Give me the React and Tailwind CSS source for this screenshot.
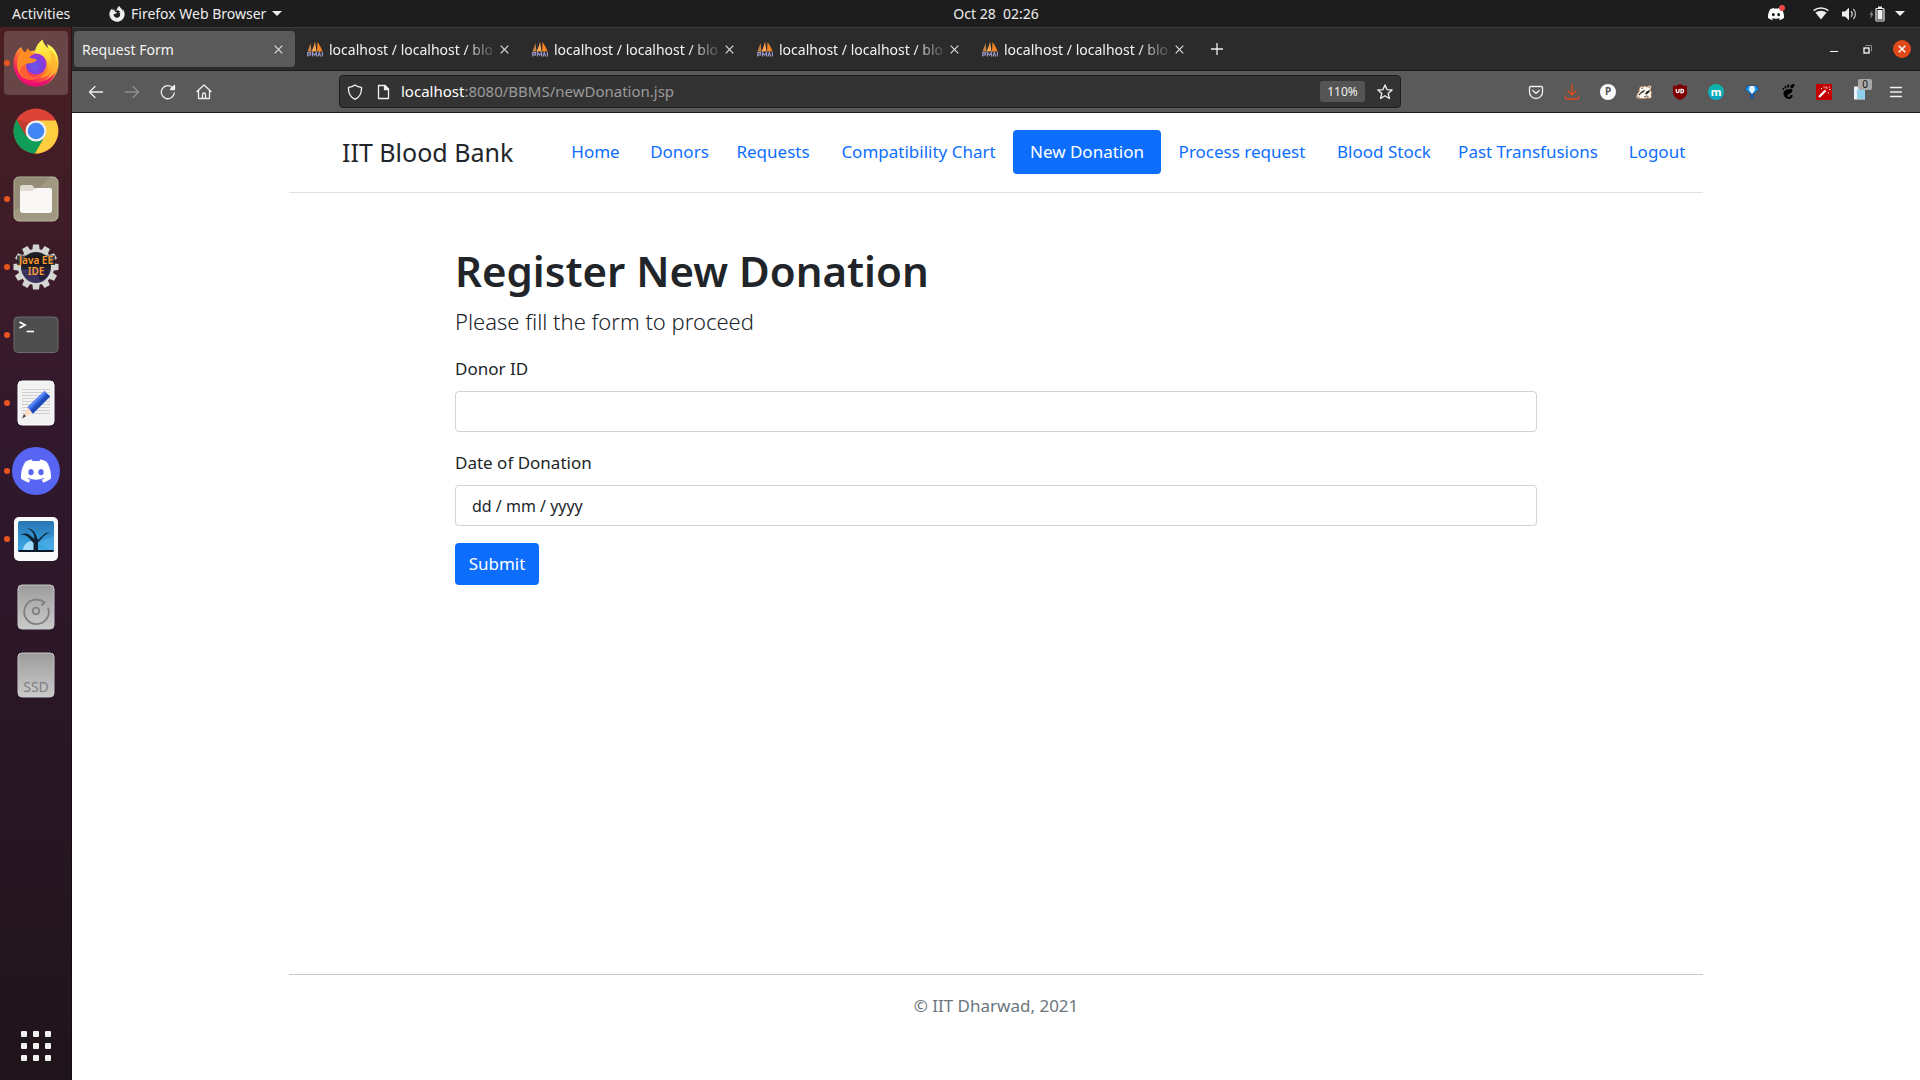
import { FaFirefoxBrowser } from 'react-icons/fa';
import { SiDiscord, SiGnome } from 'react-icons/si';

const tabs = ['a', 'b', 'c', 'd'];

const links = [
  { label: 'Home', width: 'w-[83px]' },
  { label: 'Donors', width: 'w-[85px]' },
  { label: 'Requests', width: 'w-[102px]' },
  { label: 'Compatibility Chart', width: 'w-[189px]' },
  { label: 'New Donation', width: 'w-[148px]', active: true },
  { label: 'Process request', width: 'w-[162px]' },
  { label: 'Blood Stock', width: 'w-[122px]' },
  { label: 'Past Transfusions', width: 'w-[166px]' },
  { label: 'Logout', width: 'w-[92px]' },
];

function Caret() {
  return (
    <svg width="10" height="5" viewBox="0 0 10 5" fill="#eee"><path d="M0 0h10L5 5z" /></svg>
  );
}

function TopBar() {
  return (
    <header className="flex h-[27px] shrink-0 items-center bg-[#1d1d1d] text-sm text-[#eee]">
      <div className="flex flex-1 basis-[87px] items-center pl-3">
        <button className="w-[97px] text-left">Activities</button>
        <button className="flex items-center gap-1.5 whitespace-nowrap">
          <FaFirefoxBrowser size={16} />
          <span>Firefox Web Browser</span>
          <Caret />
        </button>
      </div>
      <button className="whitespace-pre">Oct 28  02:26</button>
      <div className="flex flex-1 basis-0 items-center justify-end pr-[15px]">
        <span className="relative mr-[29px]">
          <SiDiscord size={16} color="#fff" />
          <span className="absolute -right-px -top-px h-[6px] w-[6px] rounded-full bg-[#f04747]" />
        </span>
        <svg className="mr-3" width="16" height="13" viewBox="0 0 16 13" fill="#eee">
          <path d="M2.4 5.6 8 12.6l5.6-7A9 9 0 0 0 2.4 5.600z" />
          <path d="M.6 3.600A12 12 0 0 1 15.400 3.600" fill="none" stroke="#eee" strokeWidth="1.600" />
        </svg>
        <svg className="mr-3" width="16" height="14" viewBox="0 0 16 14" fill="#eee">
          <path d="M1 4.500h3L8 .8v12.400L4 9.500H1z" />
          <path d="M10 4.300a4 4 0 0 1 0 5.400" fill="none" stroke="#ccc" strokeWidth="1.300" />
          <path d="M12.300 2a7 7 0 0 1 0 10" fill="none" stroke="#bbb" strokeWidth="1.300" />
        </svg>
        <svg className="mr-2.5" width="16" height="16" viewBox="0 0 16 16">
          <path d="M3.500 4 0.500 9h1.600L1.500 13 4.500 7.500H2.900z" fill="#888" />
          <rect x="7" y="2.500" width="8" height="12.500" rx="1" fill="none" stroke="#eee" strokeWidth="1.200" />
          <path d="M9 .5h4v2H9zM8.500 4h5v9.500h-5z" fill="#eee" />
        </svg>
        <Caret />
      </div>
    </header>
  );
}

function FirefoxIcon() {
  return (
    <svg width="46" height="48" viewBox="0 0 46 48">
      <defs>
        <linearGradient id="ffBody" x1="0.85" y1="0.1" x2="0.2" y2="0.95">
          <stop offset="0.05" stopColor="#fff44f" />
          <stop offset="0.35" stopColor="#ffa436" />
          <stop offset="0.6" stopColor="#ff5a3c" />
          <stop offset="0.85" stopColor="#f5156c" />
        </linearGradient>
        <linearGradient id="ffFlame" x1="0.5" y1="0" x2="0.7" y2="1">
          <stop offset="0" stopColor="#fff44f" />
          <stop offset="0.5" stopColor="#ffd63a" />
          <stop offset="1" stopColor="#ff8a1e" />
        </linearGradient>
        <radialGradient id="ffGlobe" cx="0.45" cy="0.6" r="0.6">
          <stop offset="0" stopColor="#6a5af0" />
          <stop offset="0.6" stopColor="#7c3fdc" />
          <stop offset="1" stopColor="#a62fd6" />
        </radialGradient>
      </defs>
      <path d="M8 8C9 12 11 14 14 14c6-4 14-3 17 3 6-2 5-6 3-12 8 3 12 12 11.500 20A22.500 22.500 0 0 1 .5 25C.4 18 3 12 8 8z" fill="url(#ffBody)" />
      <path d="M22 16C21 10 25 4 29.500.5c1 5 4 7 7.500 10.500C41 15 43 21 41 28c-2 8-9 11-15 10 7-2 11-8 9-14-2-5-7-8-13-8z" fill="url(#ffFlame)" />
      <path d="M37 11c5 4 8 10 7.500 16C44 36 37 43 29 45c8-6 11-13 10-21-.4-5-1-9-2-13z" fill="#ffb52e" opacity="0.7" />
      <path d="M3 35c5 8 13 10 20 9 8-1 14-4 19-10-4 9-11 13.500-19 13.500S6 43 3 35z" fill="#e3126f" />
      <circle cx="23" cy="25" r="10.500" fill="url(#ffGlobe)" />
      <path d="M8 8c1 2 2 4 4 5.500L15 9c1 3 3 5 6 6.500-3 1-4 2-5 3l8 2c-1 3-7 4-10 4-2 2-2 5-.5 8 2 5 7 6.500 12 5.500-6 5-16 3-20-5C3 26 4 18 7 15z" fill="#ff8b24" />
      <path d="M13 25c-2 4-1 9 3 11.500 3 2 7 2 10 1-6 5-15 3-19-4-1-2 2-8 6-8.500z" fill="#ff5e35" />
    </svg>
  );
}

function ChromeIcon() {
  return (
    <svg width="46" height="46" viewBox="0 0 46 46">
      <circle cx="23" cy="23" r="22.500" fill="#dd4437" />
      <path d="M3.600 11.600A22.500 22.500 0 0 0 22 45.500L32.500 28 23 23 13.500 28z" fill="#0f9d58" />
      <path d="M42.700 12.500A22.500 22.500 0 0 1 22 45.480L32.200 27.500 31 17 23 12.500z" fill="#ffcd40" />
      <path d="M3.600 11.600 13 28l6-13z" fill="#c33b2e" />
      <circle cx="23" cy="23" r="10.500" fill="#f1f1f1" />
      <circle cx="23" cy="23" r="8.300" fill="#4285f4" />
    </svg>
  );
}

function FilesIcon() {
  return (
    <svg width="46" height="46" viewBox="0 0 46 46">
      <rect x="1" y="1" width="44" height="44" rx="5" fill="#a09880" stroke="#bdb7a2" />
      <path d="M1.500 6a4.500 4.500 0 0 1 4.500-4.500h31L1.500 35z" fill="#948c76" />
      <path d="M7 11.500a2.500 2.500 0 0 1 2.500-2.500H19l4 4.500v5H7z" fill="#dedad0" />
      <path d="M7 15h12l4-3h14a2 2 0 0 1 2 2v20a3 3 0 0 1-3 3H10a3 3 0 0 1-3-3z" fill="#f9f8f7" />
    </svg>
  );
}

const teeth = [0, 30, 60, 90, 120, 150, 180, 210, 240, 270, 300, 330];

function JavaIcon() {
  return (
    <svg width="46" height="46" viewBox="0 0 46 46">
      {teeth.map((angle) => (
        <path key={angle} d="M20 .5h6l1 8.500h-8z" fill="#d3d5d1" transform={`rotate(${angle} 23 23)`} />
      ))}
      <circle cx="23" cy="23" r="18" fill="#d3d5d1" />
      <circle cx="23" cy="23" r="15" fill="#20202a" />
      <path d="M9 25h28a14 14 0 0 1-28 0z" fill="#3c3260" />
      <path d="M23 25h14a14 14 0 0 1-10 12z" fill="#26213a" />
      <path d="M4 11.500h38v9.500H4z" fill="#1a1614" opacity="0.75" />
      <g fontFamily="Noto Sans, sans-serif" fontSize="10" fontWeight="600" fill="#ff9d33" textAnchor="middle">
        <text x="23" y="20">Java EE</text>
        <text x="23" y="31">IDE</text>
      </g>
    </svg>
  );
}

function TerminalIcon() {
  return (
    <svg width="46" height="38" viewBox="0 0 46 38">
      <rect x="1" y="1" width="44" height="35.500" rx="4" fill="#4d4d4d" stroke="#6c6c6c" />
      <path d="m6.500 6 5.500 3-5.500 3" fill="none" stroke="#fff" strokeWidth="1.800" />
      <path d="M13.500 15.500h7.500" stroke="#fff" strokeWidth="1.600" />
    </svg>
  );
}

function EditorIcon() {
  return (
    <svg width="38" height="46" viewBox="0 0 38 46">
      <rect x="1" y="1" width="36" height="44" rx="4" fill="#f2f2f2" stroke="#fff" />
      <path d="M5 9.500h28M5 12.500h28M5 15.500h28M5 18.500h28M5 21.500h28M5 24.500h28M5 27.500h28M5 30.500h28M5 33.500h28" stroke="#d0d0d0" />
      <path d="m11.500 27.500 4.500 5-11 6z" fill="#ffdcc0" />
      <path d="m7 34 2 2.200L5 38.500z" fill="#444" />
      <path d="M27.500 11 33 16.500 16 33.500 10.500 27z" fill="#3465e0" />
      <path d="m30.500 14 2.500 2.500-17 17-2.500-3z" fill="#1e4bb8" />
      <path d="m27.500 11 1.500 1.500-17 16.500-1.500-2z" fill="#5a8af5" />
    </svg>
  );
}

function DiscordIcon() {
  return (
    <span className="flex h-12 w-12 items-center justify-center rounded-full bg-[#5865f2]">
      <SiDiscord size={30} color="#fff" />
    </span>
  );
}

function PhotoIcon() {
  return (
    <svg width="46" height="46" viewBox="0 0 46 46">
      <defs>
        <linearGradient id="sky" x1="0" y1="0" x2="0" y2="1">
          <stop offset="0" stopColor="#2a76b4" />
          <stop offset="1" stopColor="#3aacec" />
        </linearGradient>
      </defs>
      <rect x="1" y="1" width="44" height="44" rx="5" fill="#fafafa" />
      <rect x="5" y="5" width="36" height="31" rx="2" fill="url(#sky)" />
      <path d="M10 34a9 9 0 0 1 13-8v8z" fill="#a5dcfa" />
      <path d="M24 27 41 36V20z" fill="#5ab4ea" opacity="0.5" />
      <path d="M20.500 35V27l-5-5.500c-2-2-4-3-8-2.500 3-2 7-2 9 0l5 4-.5-4c-1-3-3-5-7-7 5 1 8 4 9 7l2 5 4-4c3-3 5-4 9-3-4 0-6 2-8 4l-5 5.500V35z" fill="#0e2233" />
      <path d="M5 34h36a2 2 0 0 1-2 2H7a2 2 0 0 1-2-2z" fill="#081826" />
    </svg>
  );
}

function DriveIcon({ ssd }) {
  return (
    <svg width="38" height="46" viewBox="0 0 38 46">
      <defs>
        <linearGradient id="drive" x1="0" y1="0" x2="0" y2="1">
          <stop offset="0" stopColor="#9c9c9c" />
          <stop offset="1" stopColor="#cbcbcb" />
        </linearGradient>
      </defs>
      <rect x="1" y="1" width="36" height="44" rx="4" fill="url(#drive)" stroke="#c8c8c8" />
      {ssd ? (
        <text x="19" y="40" fontFamily="Noto Sans, sans-serif" fontSize="14" fill="#808080" textAnchor="middle">SSD</text>
      ) : (
        <g fill="none" stroke="#808080" strokeWidth="1.800">
          <path d="M31 23.500A12.300 12.300 0 1 1 27.500 18.500L24.500 21.500" />
          <circle cx="19" cy="27" r="3.300" />
        </g>
      )}
    </svg>
  );
}

const dockApps = [
  { name: 'Firefox', icon: <FirefoxIcon />, running: true, focused: true },
  { name: 'Chrome', icon: <ChromeIcon /> },
  { name: 'Files', icon: <FilesIcon />, running: true },
  { name: 'Eclipse', icon: <JavaIcon />, running: true },
  { name: 'Terminal', icon: <TerminalIcon />, running: true },
  { name: 'Text Editor', icon: <EditorIcon />, running: true },
  { name: 'Discord', icon: <DiscordIcon />, running: true },
  { name: 'Image Viewer', icon: <PhotoIcon />, running: true },
  { name: 'Disk', icon: <DriveIcon /> },
  { name: 'SSD', icon: <DriveIcon ssd /> },
];

function Dock() {
  return (
    <aside className="flex w-[72px] shrink-0 flex-col items-center gap-1 border-r border-black/40 bg-linear-to-b from-[#4a1f22] via-[#31182d] via-40% to-[#20141b] pt-1 pb-[19px]">
      {dockApps.map((app) => (
        <button
          key={app.name}
          aria-label={app.name}
          className={`relative flex h-16 w-16 items-center justify-center rounded ${app.focused ? 'bg-[#684648]' : ''}`}
        >
          {app.icon}
          {app.running && <span className="absolute left-0 top-[29px] h-1.5 w-1.5 rounded-full bg-[#e95420]" />}
        </button>
      ))}
      <button aria-label="Show Applications" className="mt-auto grid grid-cols-3 gap-1.5">
        {[0, 1, 2, 3, 4, 5, 6, 7, 8].map((n) => (
          <span key={n} className="h-1.5 w-1.5 rounded-[1px] bg-[#f0f0ee]" />
        ))}
      </button>
    </aside>
  );
}

function CloseMark() {
  return (
    <svg width="9" height="9" viewBox="0 0 9 9" stroke="#ddd" strokeWidth="1.200"><path d="m.7.7 7.600 7.600M8.300.7.700 8.300" /></svg>
  );
}

function SailsIcon() {
  return (
    <svg className="shrink-0" width="16" height="16" viewBox="0 0 16 16">
      <path d="M.5 10.500C1.500 8 2.500 5 3.500 2L4.500 10.500z" fill="#c98340" />
      <path d="M4.500 10.500C6 7.500 7.500 3.500 8 .5L9.500 10.500z" fill="#fba654" />
      <path d="M10 10.500 10.500 1C12.500 4 14.500 7 15.500 10.500z" fill="#f58220" />
      <path d="M.7 15.500V11.700h2.800v2.100H1M5.500 15.500v-4l2 2.500 2-2.500v4M11 15.500l1.300-4 1.300 4M15.400 11v4.500" fill="none" stroke="#9694c4" strokeWidth="1.200" />
    </svg>
  );
}

function TabStrip() {
  return (
    <div className="flex h-11 items-center border-y border-t-[#3c3c3c] border-b-[#1c1c1c] bg-[#2b2b2b] pl-0.5 text-sm text-[#f2f2f2]">
      <div className="flex h-9 w-[221px] items-center justify-between rounded bg-[#5a5a5a] pl-2 pr-3">
        <span className="pt-0.5">Request Form</span>
        <button aria-label="Close tab"><CloseMark /></button>
      </div>
      {tabs.map((tab) => (
        <div key={tab} className="flex h-9 w-[225px] items-center pl-3 pr-4">
          <SailsIcon />
          <span className="ml-1.5 w-[169px] shrink-0 whitespace-nowrap pt-0.5 mask-r-from-80% mask-r-to-100%">localhost / localhost / blo</span>
          <button aria-label="Close tab" className="ml-0.5 shrink-0"><CloseMark /></button>
        </div>
      ))}
      <button aria-label="New tab" className="ml-4">
        <svg width="12" height="12" viewBox="0 0 12 12" stroke="#eee" strokeWidth="1.300"><path d="M6 0v12M0 6h12" /></svg>
      </button>
      <div className="ml-auto flex items-center pr-[9px]">
        <button aria-label="Minimize" className="mr-[25px] mt-1 h-px w-2 bg-white" />
        <button aria-label="Restore" className="mr-[21px]">
          <svg width="9" height="9" viewBox="0 0 9 9" fill="none">
            <path d="M2.500.5h6v6" stroke="#888" />
            <rect x="1" y="3" width="5" height="5" stroke="#fff" strokeWidth="1.300" />
          </svg>
        </button>
        <button aria-label="Close window" className="flex h-[18px] w-[18px] items-center justify-center rounded-full bg-[#e2491a]">
          <svg width="8" height="8" viewBox="0 0 8 8" stroke="#fff" strokeWidth="1.400"><path d="m.7.7 6.600 6.600M7.300.7.700 7.300" /></svg>
        </button>
      </div>
    </div>
  );
}

function Icon16({ children, color = '#f0f0f0' }) {
  return (
    <svg width="16" height="16" viewBox="0 0 16 16" fill="none" stroke={color} strokeWidth="1.300" strokeLinecap="round" strokeLinejoin="round">
      {children}
    </svg>
  );
}

const navButtons = [
  { name: 'Back', icon: <Icon16><path d="M14.500 8h-13M7 2.500 1.500 8 7 13.500" /></Icon16> },
  { name: 'Forward', icon: <Icon16 color="#8f8f8f"><path d="M1.500 8h13M9 2.500 14.500 8 9 13.500" /></Icon16> },
  { name: 'Reload', icon: <Icon16><path d="M14.300 9A6.500 6.500 0 1 1 12.800 4" /><path d="M14.500 1.500v4h-4z" fill="#f0f0f0" /></Icon16> },
  { name: 'Home', icon: <Icon16><path d="M1 7.500 8 1l7 6.500M2.500 6.500V14.500h11V6.500M6.500 14.500v-4a1.500 1.500 0 0 1 3 0v4" /></Icon16> },
];

const extensions = [
  { name: 'Pocket', icon: <Icon16><path d="M2.500 2.500h11a1 1 0 0 1 1 1V8a6.500 6.500 0 0 1-13 0V3.500a1 1 0 0 1 1-1zM4.800 6.500 8 9.500l3.200-3" /></Icon16> },
  { name: 'Downloads', icon: <Icon16 color="#e2491a"><path d="M8 .8v10M4 7l4 4 4-4M1.500 12v1.500a1.500 1.500 0 0 0 1.500 1.500h10a1.500 1.500 0 0 0 1.500-1.500V12" /></Icon16> },
  { name: 'P', icon: <span className="flex h-4 w-4 items-center justify-center rounded-full bg-[#fafafa] text-[10px] font-bold text-[#555]">P</span> },
  {
    name: 'Privacy Badger',
    icon: (
      <svg width="16" height="14" viewBox="0 0 16 14">
        <path d="M.5 12 1.500 8.500 3 7l.5-4L5 1.500 7 2l1.500-1L11 2l3-1.500 1.300 1.500-1 2.500 1.200 3-.5 2 .5 2.500-1.500 1.200-3-.5-2 .8H1.500z" fill="#fbf6ef" stroke="#c98b55" strokeWidth="0.700" />
        <path d="M2.500 9.500 5.500 6.500 9 4.500 8 7 5 8.500 3.500 10.500z" fill="#35302c" />
        <path d="M9 9l1.500-2.500L14 5l-.5 2-3 2.500zM12.500 2l1.500.2-.5 1z" fill="#1d1a18" />
        <path d="M5.500 3.500 7 3M1.500 12l2 .5M8 12l2.500-1 2 .5" fill="none" stroke="#4a4039" strokeWidth="0.900" />
      </svg>
    ),
  },
  {
    name: 'uBlock Origin',
    icon: (
      <svg width="14" height="16" viewBox="0 0 14 16">
        <path d="M7 0c2 1.300 4.500 1.800 7 1.800V8c0 4-3 6.500-7 8-4-1.500-7-4-7-8V1.800C2.500 1.800 5 1.300 7 0z" fill="#800000" />
        <path d="M3.300 5v2.300a1.400 1.400 0 0 0 2.800 0V5" fill="none" stroke="#fff" strokeWidth="1.300" />
        <path d="M8 5.300h.8a1.800 1.800 0 0 1 0 3.600H8z" fill="none" stroke="#fff" strokeWidth="1.300" />
      </svg>
    ),
  },
  { name: 'm', icon: <span className="flex h-4 w-4 items-center justify-center rounded-full bg-linear-to-b from-[#0fb5a0] to-[#12a5cc] text-[11px] leading-none font-bold text-white">m</span> },
  {
    name: 'Gem',
    icon: (
      <svg width="14" height="14" viewBox="0 0 14 14">
        <path d="M2.500.5h9L14 4.500 8.500 9v4.500h-3V9L0 4.500z" fill="#0a3f8f" />
        <path d="M3 1h8l2.300 3.500L7 9.500.7 4.500z" fill="#1e9af0" />
        <path d="M5 1h4l1 4-3 4-3-4z" fill="#e6f6ff" />
        <path d="M6 9h2v5H6z" fill="#1a5fb0" />
      </svg>
    ),
  },
  { name: 'GNOME', icon: <SiGnome size={15} color="#000" /> },
  {
    name: 'Magic',
    icon: (
      <svg width="16" height="16" viewBox="0 0 16 16">
        <rect width="16" height="16" fill="#c40000" />
        <path d="m3 13 6.500-6.500" stroke="#fff" strokeWidth="2.200" />
        <path d="M10 2.500v2M13 5.500h1.500M12.500 8.500v1M5 4.500h1M7.500 3h1M12 3.500l-1 1M13.500 2.500v.8" stroke="#fff" />
      </svg>
    ),
  },
  {
    name: 'Notes',
    icon: (
      <span className="relative">
        <svg width="16" height="16" viewBox="0 0 16 16">
          <path d="M2 2.500h11v13H2z" fill="#e9f3f8" />
          <path d="M5 6h8v9H5z" fill="#8fd0ec" />
        </svg>
        <span className="absolute -top-[5px] left-1.5 flex h-[11px] w-3.5 items-center justify-center rounded-[2px] bg-[#a8a8a8] text-[10px] leading-none text-[#111]">0</span>
      </span>
    ),
  },
  { name: 'Menu', icon: <Icon16><path d="M2.500 3.500h11M2.500 8h11M2.500 12.500h11" /></Icon16> },
];

function Toolbar() {
  return (
    <div className="flex h-[42px] items-center border-b border-[#1c1c1c] bg-[#5a5a5a]">
      <div className="flex w-[267px] shrink-0 pl-1.5">
        {navButtons.map((b) => (
          <button key={b.name} aria-label={b.name} className="flex h-9 w-9 items-center justify-center">{b.icon}</button>
        ))}
      </div>
      <div className="flex h-[33px] flex-1 items-center rounded border border-[#1e1e1e] bg-[#333] pl-[7px]">
        <Icon16><path d="M8 .9c2 1.500 4.300 2.200 6.500 2.400.3 5-1.500 9.700-6.500 12-5-2.300-6.800-7-6.500-12C3.700 3.100 6 2.400 8 .9z" /></Icon16>
        <span className="w-3" />
        <Icon16><path d="M3.500 1.500h6.500l3.500 3.500v9.500h-10z" /><path d="M9.500 1.500v4h4z" fill="#f0f0f0" /></Icon16>
        <p className="ml-2.5 text-[15px] text-[#9b9b9b]"><span className="text-white">localhost</span>:8080/BBMS/newDonation.jsp</p>
        <button className="ml-auto h-[21px] w-[45px] rounded-[3px] bg-[#555] text-xs text-[#f0f0f0]">110%</button>
        <button aria-label="Bookmark" className="ml-3 mr-[7px]">
          <Icon16><path d="m8 .9 2 4.700 5.100.4-3.900 3.400 1.200 5.100L8 11.800l-4.400 2.700 1.200-5.100L.9 6 6 5.600z" /></Icon16>
        </button>
      </div>
      <div className="flex shrink-0 pl-[117px] pr-1.5">
        {extensions.map((e) => (
          <button key={e.name} aria-label={e.name} className="flex h-9 w-9 items-center justify-center">{e.icon}</button>
        ))}
      </div>
    </div>
  );
}

function Page() {
  return (
    <div className="flex flex-1 flex-col bg-white px-[217px] text-[17px] leading-6 text-[#212529]">
      <header className="flex items-center justify-between border-b border-[#dee2e6] pt-[17px] pb-[18px]">
        <a href="#home" className="ml-[53px] whitespace-nowrap text-[25px]">IIT Blood Bank</a>
        <nav className="flex">
          {links.map((link) => (
            <a
              key={link.label}
              href="#page"
              className={`${link.width} rounded whitespace-nowrap py-2.5 text-center ${link.active ? 'bg-[#0d6efd] text-white' : 'text-[#0d6efd]'}`}
            >
              {link.label}
            </a>
          ))}
        </nav>
      </header>
      <main className="mx-[166px] pt-[51px]">
        <h1 className="text-[42px] leading-[53px] font-semibold">Register New Donation</h1>
        <p className="mt-2 text-[22px] leading-8 font-light">Please fill the form to proceed</p>
        <form className="mt-5">
          <label htmlFor="donor" className="block">Donor ID</label>
          <input id="donor" type="text" className="mt-2.5 block h-[41px] w-full rounded border border-[#ced4da] px-4" />
          <label htmlFor="date" className="mt-[19px] block">Date of Donation</label>
          <input id="date" type="text" defaultValue="dd / mm / yyyy" className="mt-2.5 block h-[41px] w-full rounded border border-[#ced4da] px-4 text-base" />
          <button type="submit" className="mt-[17px] h-[42px] w-[84px] rounded bg-[#0d6efd] text-white">Submit</button>
        </form>
      </main>
      <footer className="mt-auto border-t border-[#c8c8c8] pt-[19px] pb-[62px] text-center text-[#6c757d]">© IIT Dharwad, 2021</footer>
    </div>
  );
}

export default function App() {
  return (
    <div className="flex min-h-screen flex-col font-['Noto_Sans',sans-serif]">
      <TopBar />
      <div className="flex flex-1">
        <Dock />
        <div className="flex min-w-0 flex-1 flex-col">
          <TabStrip />
          <Toolbar />
          <Page />
        </div>
      </div>
    </div>
  );
}
